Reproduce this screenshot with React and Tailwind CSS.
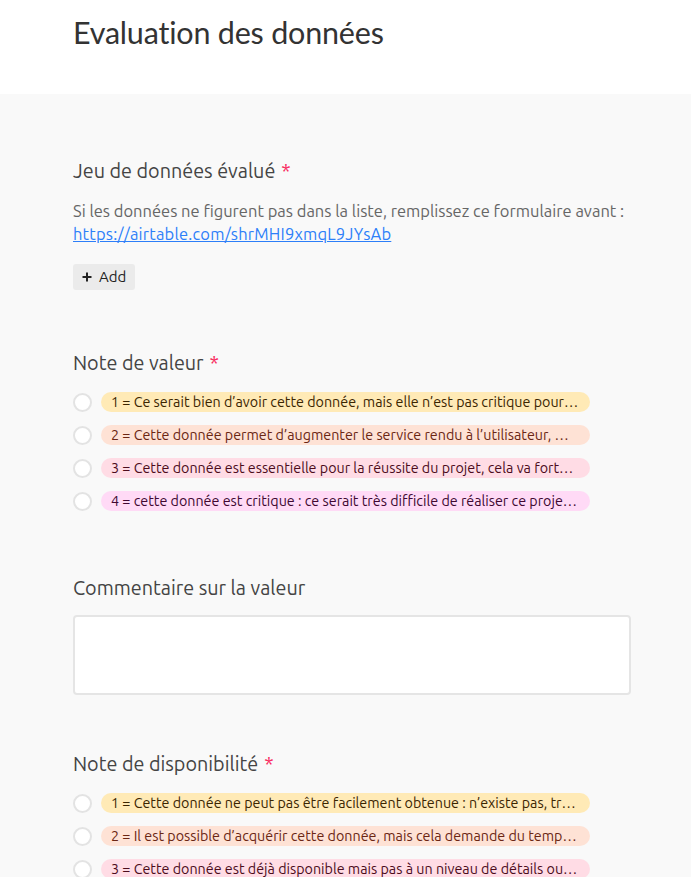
import React from "react";

const valeurOptions = [
  { label: "1 = Ce serait bien d’avoir cette donnée, mais elle n’est pas critique pour le projet", cls: "bg-[#ffeab6] text-[#3b2501]" },
  { label: "2 = Cette donnée permet d’augmenter le service rendu à l’utilisateur, mais le projet peut exister sans", cls: "bg-[#fee2d5] text-[#6b2613]" },
  { label: "3 = Cette donnée est essentielle pour la réussite du projet, cela va fortement impacter", cls: "bg-[#ffdce5] text-[#4c0c1c]" },
  { label: "4 = cette donnée est critique : ce serait très difficile de réaliser ce projet sans", cls: "bg-[#ffdaf6] text-[#400832]" },
];

const dispoOptions = [
  { label: "1 = Cette donnée ne peut pas être facilement obtenue : n’existe pas, trop chère", cls: "bg-[#ffeab6] text-[#3b2501]" },
  { label: "2 = Il est possible d’acquérir cette donnée, mais cela demande du temps et des moyens", cls: "bg-[#fee2d5] text-[#6b2613]" },
  { label: "3 = Cette donnée est déjà disponible mais pas à un niveau de détails ou de qualité suffisant", cls: "bg-[#ffdce5] text-[#4c0c1c]" },
];

function Label({ children, required }) {
  return (
    <h2 className="text-[19.8px] leading-6 text-[#444]">
      {children}
      {required && <span className="ml-[6px] text-[#f82b60]">*</span>}
    </h2>
  );
}

function RadioList({ options }) {
  return (
    <ul className="mt-[17px] flex flex-col gap-[13px]">
      {options.map((o) => (
        <li key={o.label} className="flex h-5 items-center">
          <span className="h-[19px] w-[19px] shrink-0 rounded-full border-2 border-[#e3e3e3] bg-white"></span>
          <span className={`ml-[9px] flex h-5 w-[489px] min-w-0 items-center rounded-full px-[10px] ${o.cls}`}>
            <span className="truncate text-[14.3px] leading-5">{o.label}</span>
          </span>
        </li>
      ))}
    </ul>
  );
}

export default function App() {
  return (
    <div className="min-h-screen bg-[#f9f9f9]" style={{ fontFamily: "Ubuntu, 'Open Sans', 'Noto Sans', sans-serif" }}>
      <header className="h-[94px] bg-white px-[73px] pt-[14px]">
        <h1 className="text-[30.5px] leading-9 text-[#333] tracking-[-0.2px]" style={{ fontFamily: "Lato, 'Noto Sans', sans-serif" }}>
          Evaluation des données
        </h1>
      </header>
      <main className="w-[631px] pl-[73px] pt-[65px]">
        <section>
          <Label required>Jeu de données évalué</Label>
          <p className="mt-[17px] whitespace-nowrap text-[16.5px] leading-[23px] text-[#666]">
            Si les données ne figurent pas dans la liste, remplissez ce formulaire avant :
            <br />
            <a href="#" className="text-[#2d7ff9] underline tracking-[0.2px]">https://airtable.com/shrMHI9xmqL9JYsAb</a>
          </p>
          <button className="mt-[18px] flex h-[26px] items-center gap-[7px] rounded-[3px] bg-[#ebebeb] px-[9px] text-[15px] text-[#222]">
            <svg width="10" height="10" viewBox="0 0 10 10" fill="none" stroke="currentColor" strokeWidth="2">
              <path d="M5 0.5v9M0.5 5h9" />
            </svg>
            Add
          </button>
        </section>

        <section className="mt-[61px]">
          <Label required>Note de valeur</Label>
          <RadioList options={valeurOptions} />
        </section>

        <section className="mt-[65px]">
          <Label>Commentaire sur la valeur</Label>
          <textarea className="mt-[15px] block h-[80px] w-[558px] resize-none rounded-[4px] border-2 border-[#e5e5e5] bg-white outline-none"></textarea>
        </section>

        <section className="mt-[57px]">
          <Label required>Note de disponibilité</Label>
          <RadioList options={dispoOptions} />
        </section>
      </main>
    </div>
  );
}
